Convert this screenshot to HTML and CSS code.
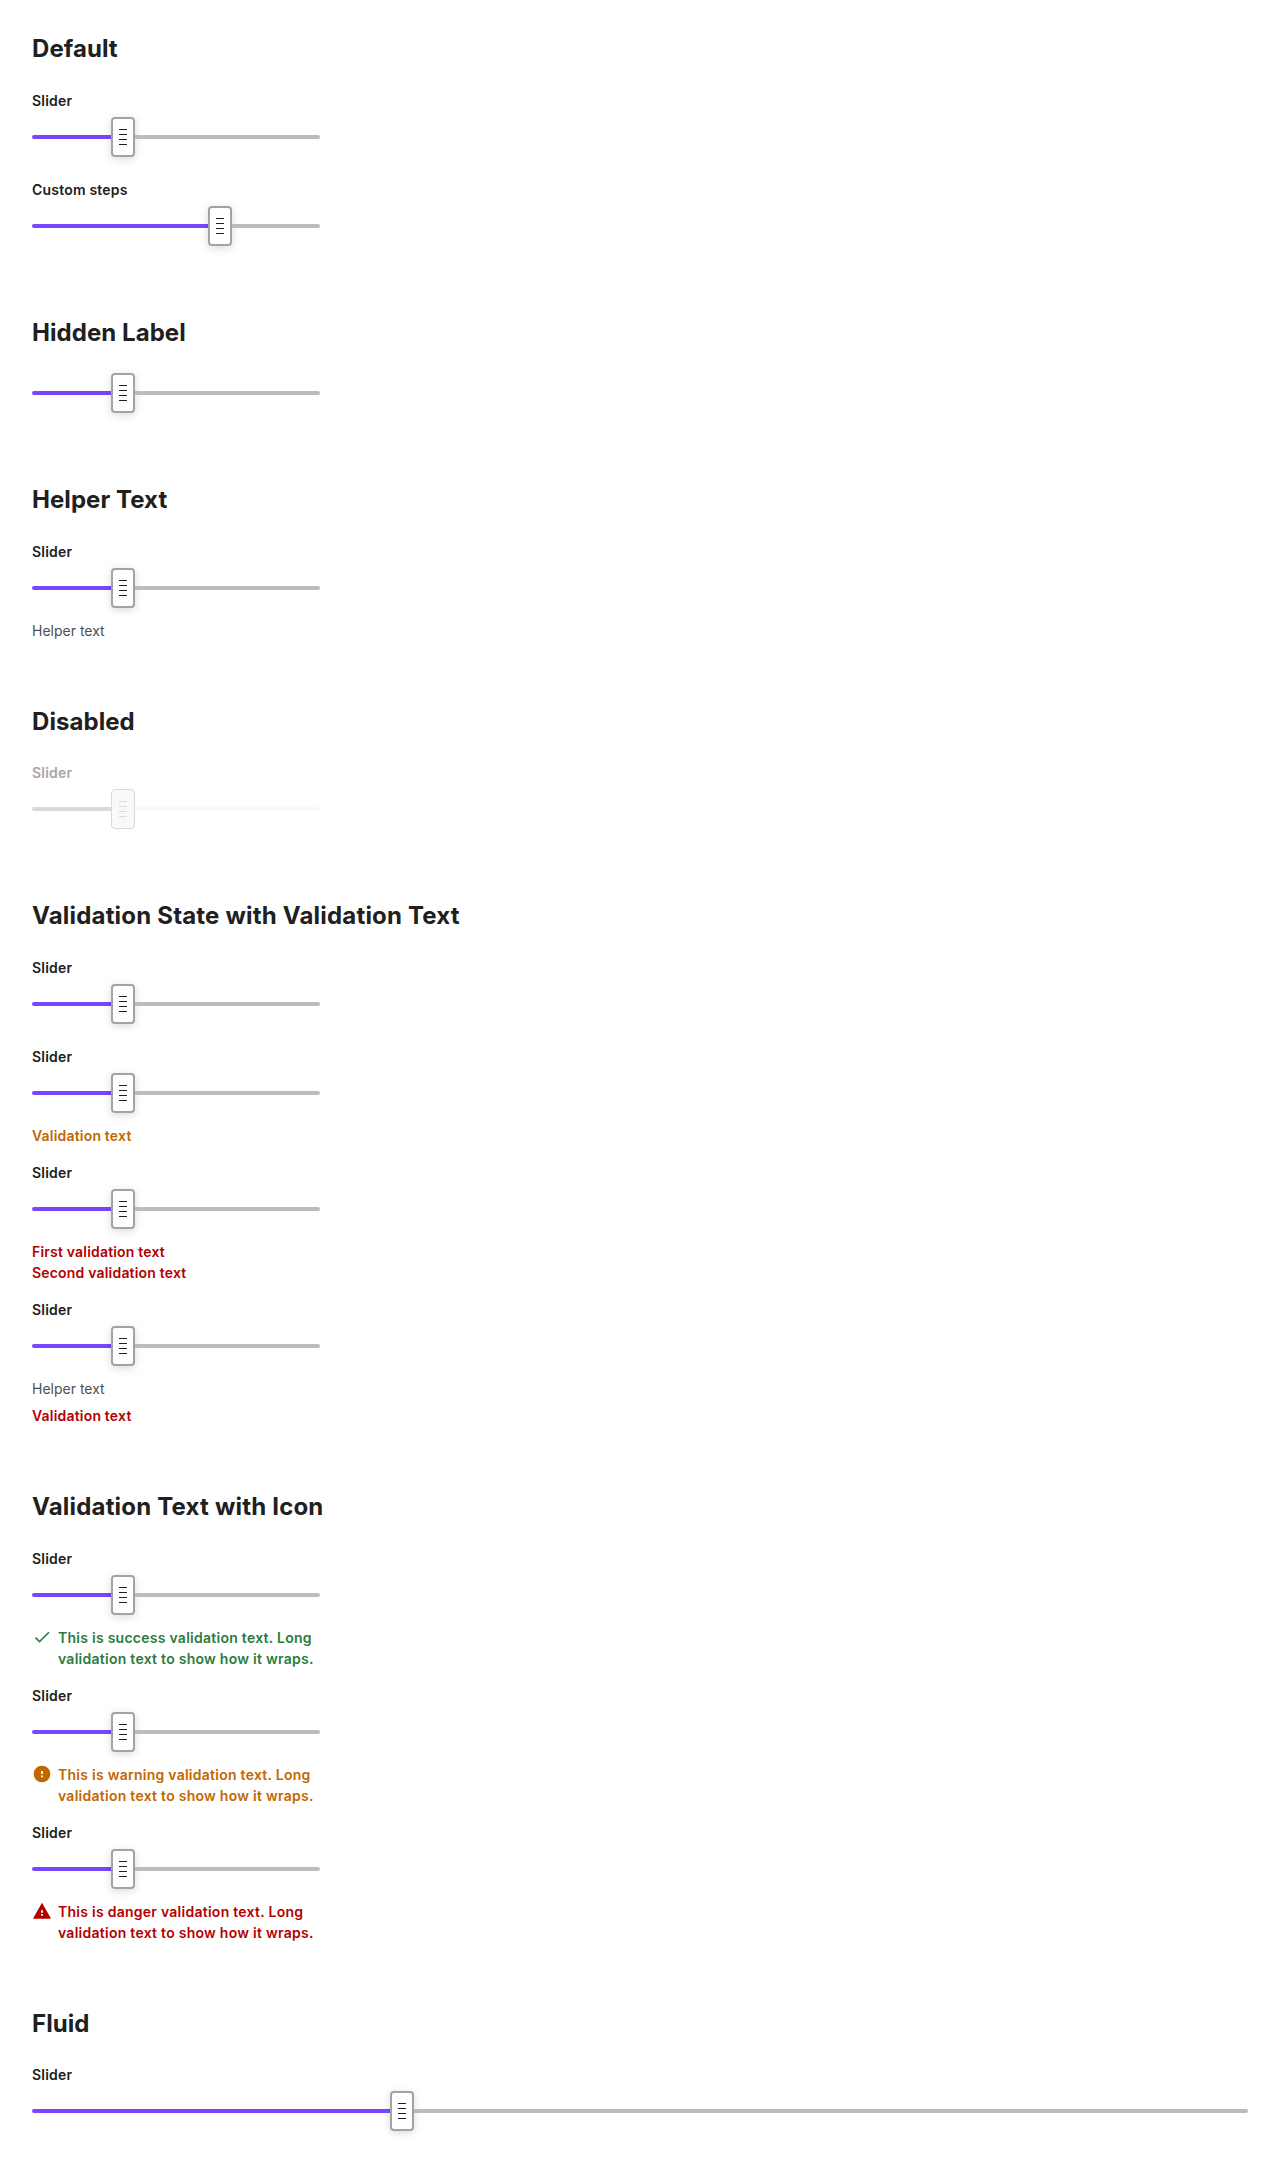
FILE: index.html
```html
<!DOCTYPE html>
<html lang="en">
<head>
<meta charset="utf-8">
<title>Slider</title>
<link rel="stylesheet" href="styles.css">
</head>
<body>
<svg width="0" height="0" class="sprite" aria-hidden="true">
  <symbol id="check" viewBox="0 0 24 24"><path d="M9 16.17 4.83 12l-1.42 1.41L9 19 21 7l-1.41-1.41z" fill="currentColor"/></symbol>
  <symbol id="warning" viewBox="0 0 24 24"><path fill-rule="evenodd" d="M12 2a10 10 0 1 0 0 20 10 10 0 0 0 0-20zm1.1 14h-2.2v-2.2h2.2v2.2zm0-4h-2.2V8.4h2.2v3.6z" fill="currentColor"/></symbol>
  <symbol id="danger" viewBox="0 0 24 24"><path fill-rule="evenodd" d="M12 2.2 1.6 20.4q-.3.7.5.8h19.8q.8-.1.5-.8zm1.1 15.5h-2.2v-2.1h2.2v2.1zm0-3.7h-2.2v-2.8h2.2v2.8z" fill="currentColor"/></symbol>
</svg>
<main id="page"></main>
<script src="main.js"></script>
</body>
</html>
```
FILE: styles.css
```css
body {
  margin: 0;
  padding: 32px;
  background: #fff;
  color: #202020;
  font: 400 14px/21px Inter, sans-serif;
  font-optical-sizing: none;
}
.sprite { position: absolute; }
#page { display: flex; flex-direction: column; gap: 64px; }
.section-title {
  margin: 0 0 24px;
  font-size: 24px;
  font-weight: 700;
  line-height: 33.6px;
  letter-spacing: 0.06px;
}
.section-title.long { letter-spacing: 0.19px; }
.stack { display: flex; flex-direction: column; gap: 16px; align-items: flex-start; }
.slider { width: 288px; }
.slider.fluid { width: 100%; }
.label { display: block; margin-bottom: 6px; font-weight: 600; letter-spacing: 0.2px; }
.control { display: flex; align-items: center; height: 40px; padding-bottom: 6px; }
.fill, .rest { height: 4px; }
.fill { background: #7a45ff; border-radius: 2px 0 0 2px; width: calc((100% - 24px) * var(--value)); }
.rest { flex: 1; background: #bcbcbc; border-radius: 0 2px 2px 0; }
.thumb {
  box-sizing: border-box;
  width: 24px;
  height: 40px;
  flex: none;
  display: flex;
  align-items: center;
  justify-content: center;
  border: 2px solid #a3a3a3;
  border-radius: 4px;
  background: #fff;
  box-shadow: 0 2px 8px rgba(0, 0, 0, 0.15);
}
.grip {
  width: 8px;
  height: 16px;
  background: repeating-linear-gradient(currentColor 0 1px, transparent 1px 5px);
}
.helper { margin-top: 6px; color: #4f4f4f; }
.validation { margin-top: 6px; display: flex; gap: 6px; font-weight: 600; letter-spacing: 0.19px; }
.validation.with-icon { letter-spacing: 0.26px; }
.icon { width: 20px; height: 20px; flex: none; }
.success { color: #2b7c3d; }
.warning { color: #c26700; }
.danger { color: #b40000; }
.disabled .label { color: #a6a6a6; }
.disabled .fill { background: #d9d9d9; }
.disabled .rest { background: #f9f9f9; }
.disabled .thumb { border: 1px solid #d9d9d9; background: #f9f9f9; box-shadow: none; color: #d9d9d9; }
```
FILE: main.js
```js
const wrapped = (kind) => [`This is ${kind} validation text. Long validation text to show how it wraps.`];
const sections = [
  ['Default', [{ label: 'Slider' }, { label: 'Custom steps', value: 2 / 3 }]],
  ['Hidden Label', [{}]],
  ['Helper Text', [{ label: 'Slider', helper: 'Helper text' }]],
  ['Disabled', [{ label: 'Slider', variant: 'disabled' }]],
  ['Validation State with Validation Text', [
    { label: 'Slider' },
    { label: 'Slider', state: 'warning', messages: ['Validation text'] },
    { label: 'Slider', state: 'danger', messages: ['First validation text', 'Second validation text'] },
    { label: 'Slider', helper: 'Helper text', state: 'danger', messages: ['Validation text'] },
  ]],
  ['Validation Text with Icon', [
    { label: 'Slider', state: 'success', icon: 'check', messages: wrapped('success') },
    { label: 'Slider', state: 'warning', icon: 'warning', messages: wrapped('warning') },
    { label: 'Slider', state: 'danger', icon: 'danger', messages: wrapped('danger') },
  ]],
  ['Fluid', [{ label: 'Slider', variant: 'fluid' }]],
];

const slider = ({ label, value = 0.3, helper, variant = '', state, icon, messages }) => `
  <div class="slider ${variant}">
    ${label ? `<span class="label">${label}</span>` : ''}
    <div class="control">
      <div class="fill" style="--value: ${value}"></div>
      <div class="thumb"><div class="grip"></div></div>
      <div class="rest"></div>
    </div>
    ${helper ? `<div class="helper">${helper}</div>` : ''}
    ${messages ? `<div class="validation ${state} ${icon ? 'with-icon' : ''}">
      ${icon ? `<svg class="icon"><use href="#${icon}"/></svg>` : ''}
      <div>${messages.map((m) => `<div>${m}</div>`).join('')}</div>
    </div>` : ''}
  </div>`;

document.getElementById('page').innerHTML = sections.map(([title, items]) => `
  <section>
    <h2 class="section-title ${title.length > 20 ? 'long' : ''}">${title}</h2>
    <div class="stack">${items.map(slider).join('')}</div>
  </section>`).join('');
```
